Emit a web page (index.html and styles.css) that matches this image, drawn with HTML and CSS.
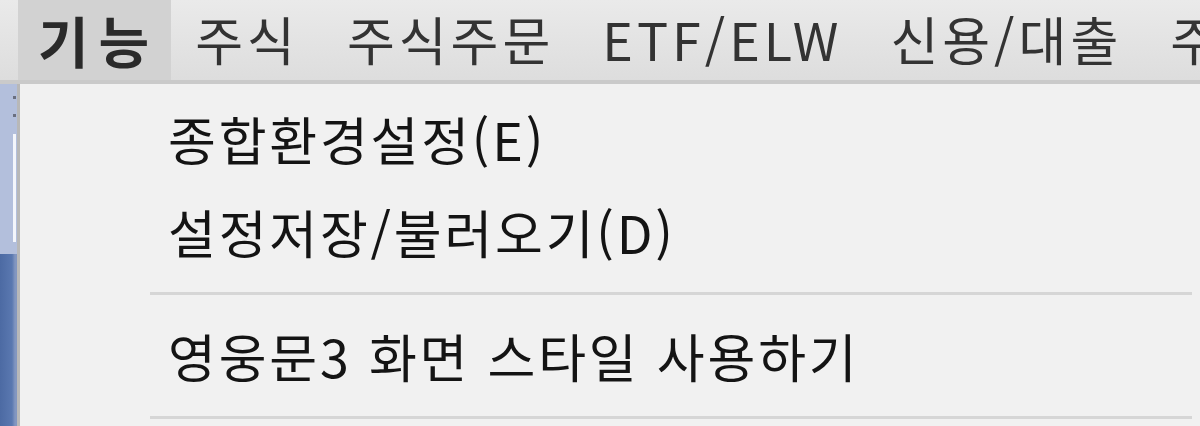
FILE: index.html
```html
<!DOCTYPE html>
<html lang="ko">
<head>
<meta charset="utf-8">
<title>메뉴</title>
<link rel="stylesheet" href="styles.css">
</head>
<body>
<div class="menubar">
  <div class="mitem active">기능</div>
  <div class="mitem">주식</div>
  <div class="mitem">주식주문</div>
  <div class="mitem">ETF/ELW</div>
  <div class="mitem">신용/대출</div>
  <div class="mitem">주</div>
</div>
<div class="below">
  <div class="desk">
    <div class="desk-top">
      <span class="dot"></span>
      <span class="dot"></span>
      <span class="bar"></span>
    </div>
    <div class="desk-bottom"></div>
  </div>
  <div class="dropdown">
    <div class="ditem">종합환경설정(E)</div>
    <div class="ditem">설정저장/불러오기(D)</div>
    <div class="sep"></div>
    <div class="ditem">영웅문3 화면 스타일 사용하기</div>
    <div class="sep"></div>
  </div>
</div>
</body>
</html>
```
FILE: styles.css
```css
html, body {
  margin: 0;
  padding: 0;
  background: #f0f0f0;
  overflow: hidden;
}
body {
  width: 1200px;
  height: 426px;
  font-family: "Noto Sans CJK KR", "Noto Sans", sans-serif;
}
.menubar {
  display: flex;
  height: 80px;
  padding-left: 18px;
  background: linear-gradient(#eaeaea, #dddddd);
  border-bottom: 4px solid #cacaca;
  white-space: nowrap;
  overflow: hidden;
}
.mitem {
  display: flex;
  align-items: center;
  padding: 0 24px 2px 24px;
  font-size: 52px;
  letter-spacing: 4px;
  line-height: 1;
  color: #333333;
}
.mitem.active {
  background: #d2d2d2;
  font-weight: 700;
  font-size: 55px;
  color: #2a2a2a;
  padding-left: 20px;
  padding-right: 12px;
  letter-spacing: 10px;
}
.below {
  display: flex;
  height: 342px;
}
.desk {
  width: 17px;
  display: flex;
  flex-direction: column;
}
.desk-top {
  height: 170px;
  background: #b3bfdc;
}
.dot {
  display: block;
  width: 3px;
  height: 3px;
  background: #6a6f80;
  margin: 12px 0 0 13px;
}
.dot + .dot { margin-top: 15px; }
.bar {
  display: block;
  width: 3px;
  height: 108px;
  background: #f4f6fb;
  margin: 17px 0 0 13px;
}
.desk-bottom {
  flex: 1;
  background: linear-gradient(90deg, #4c6aa3 0, #5a78b0 12px, #8296c0 15px);
}
.dropdown {
  flex: 1;
  background: #f1f1f1;
  border-left: 3px solid #b8b8b8;
  padding-top: 8px;
}
.ditem {
  height: 93px;
  display: flex;
  align-items: center;
  padding-left: 148px;
  font-size: 52px;
  line-height: 1;
  color: #141414;
  letter-spacing: 2.8px;
  white-space: nowrap;
}
.sep {
  height: 3px;
  margin: 14px 8px 14px 130px;
  background: #d6d6d6;
}
```
